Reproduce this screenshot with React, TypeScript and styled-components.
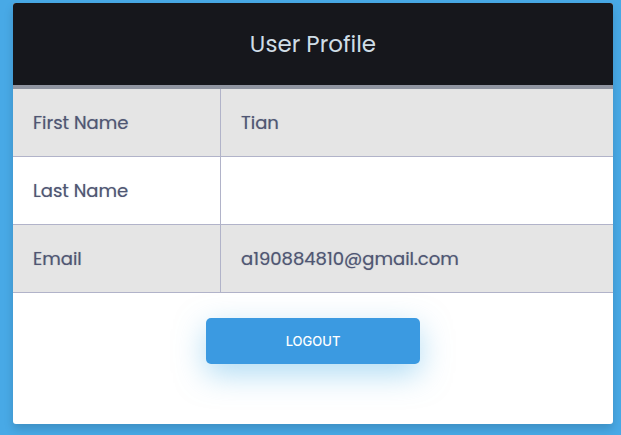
import React from "react";
import styled, { createGlobalStyle } from "styled-components";

const GlobalStyle = createGlobalStyle`
  *, *::before, *::after { box-sizing: border-box; }
  body {
    margin: 0;
    background: #48a9e6;
    font-family: Poppins, Inter, sans-serif;
  }
`;

const Page = styled.main`
  min-height: 100vh;
  padding: 3px 8px 11px 13px;
  display: flex;
  justify-content: center;
`;

const Card = styled.section`
  flex: 1;
  display: flex;
  flex-direction: column;
  align-items: center;
  overflow: hidden;
  background: #fff;
  border-radius: 3px;
  box-shadow: 0 5px 10px rgba(0, 0, 0, 0.15);
`;

const ProfileTable = styled.table`
  width: 100%;
  table-layout: fixed;
  border-spacing: 0;
  color: #4f5673;
  text-shadow: 0 0 1px rgba(79, 86, 115, 0.5);
`;

const LabelColumn = styled.col`
  width: 208px;
`;

const Title = styled.th`
  height: 86px;
  padding: 0 20px;
  background: #16171c;
  border-bottom: 4px solid #9095a1;
  color: #cfdde6;
  font-size: 23px;
  font-weight: 400;
  line-height: 32px;
  text-align: center;
  text-shadow: none;
`;

const Row = styled.tr`
  background: #fff;

  &:nth-child(odd) {
    background: #e5e5e5;
  }
`;

const Label = styled.th`
  height: 68px;
  padding: 0 20px;
  border-right: 1px solid #b1b3c9;
  border-bottom: 1px solid #b1b3c9;
  font-size: 18px;
  font-weight: 400;
  text-align: left;
`;

const Value = styled.td`
  padding: 0 20px;
  border-bottom: 1px solid #b1b3c9;
  font-size: 18px;
`;

const LogoutButton = styled.button`
  width: 214px;
  height: 46px;
  margin: 25px 0 60px;
  border: 0;
  border-radius: 5px;
  background: #3b9ae1;
  box-shadow: 0 10px 30px rgba(95, 186, 233, 0.5);
  color: #fff;
  font-family: Inter, sans-serif;
  font-size: 13px;
  font-weight: 500;
  text-transform: uppercase;
  cursor: pointer;
`;

const fields = [
  { label: "First Name", value: "Tian" },
  { label: "Last Name", value: "" },
  { label: "Email", value: "a190884810@gmail.com" },
];

export default function App() {
  return (
    <>
      <GlobalStyle />
      <Page>
        <Card>
          <ProfileTable>
            <colgroup>
              <LabelColumn />
              <col />
            </colgroup>
            <thead>
              <tr>
                <Title colSpan={2}>User Profile</Title>
              </tr>
            </thead>
            <tbody>
              {fields.map((field) => (
                <Row key={field.label}>
                  <Label scope="row">{field.label}</Label>
                  <Value>{field.value}</Value>
                </Row>
              ))}
            </tbody>
          </ProfileTable>
          <LogoutButton type="button">Logout</LogoutButton>
        </Card>
      </Page>
    </>
  );
}
